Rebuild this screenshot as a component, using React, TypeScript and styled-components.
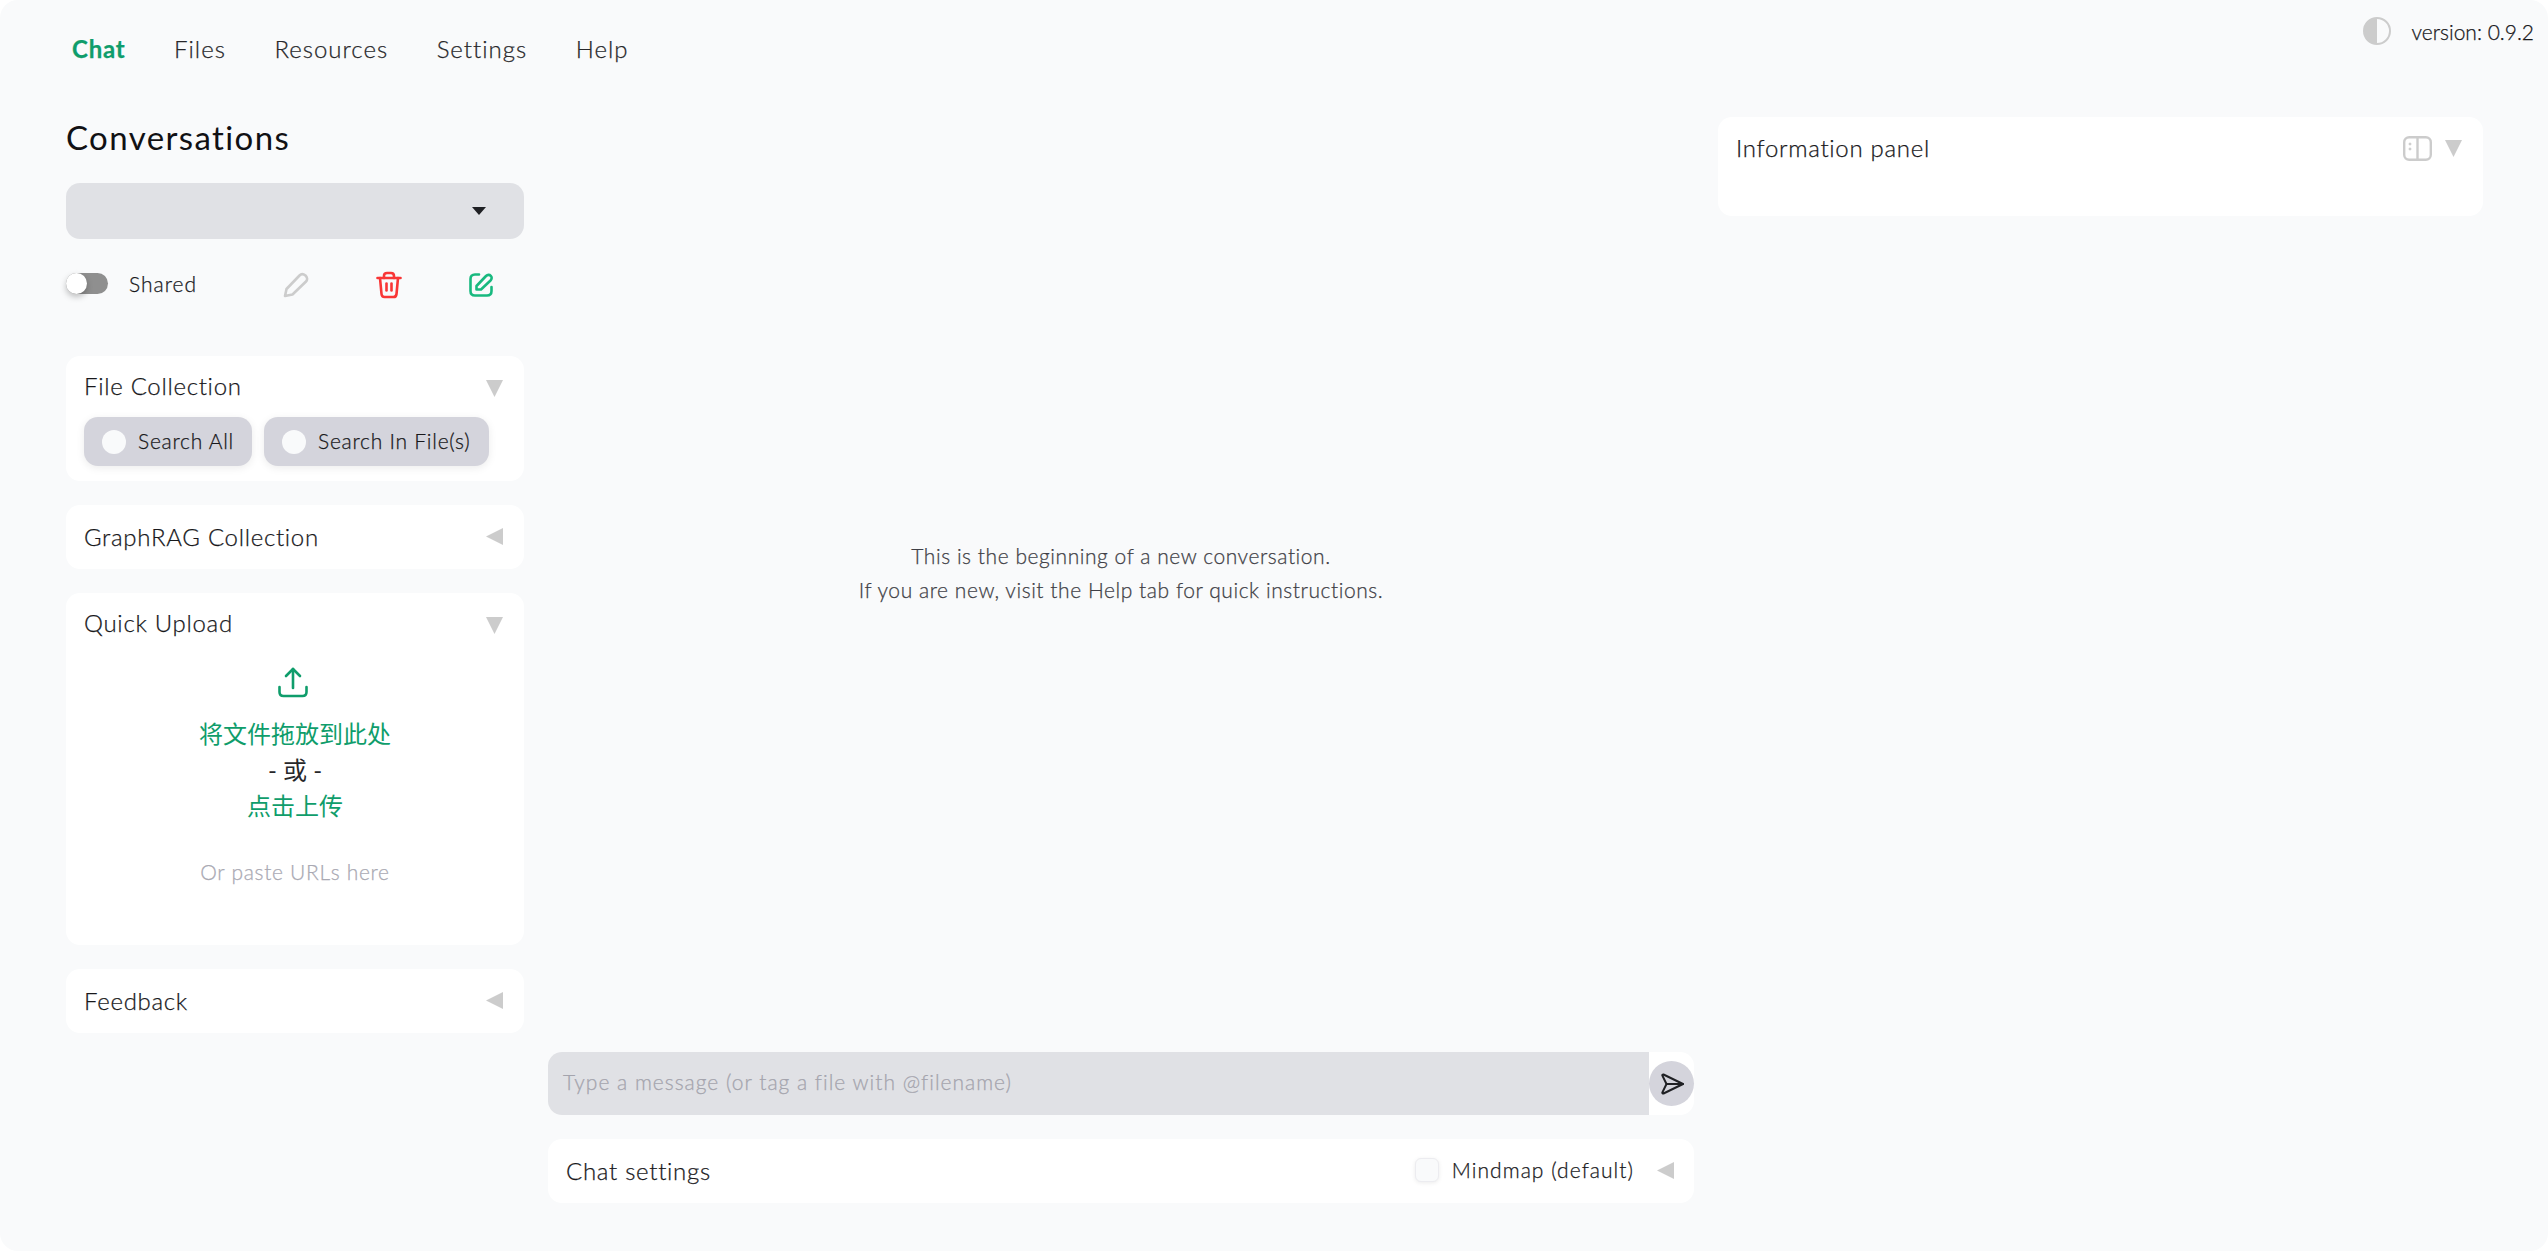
import { createGlobalStyle, styled } from "styled-components"

const FONT = `"Lato", "Noto Sans CJK SC", sans-serif`

const GlobalStyle = createGlobalStyle`
	html, body {
		margin: 0;
		padding: 0;
		background: #ffffff;
	}
	* {
		box-sizing: border-box;
	}
	body {
		font-family: ${FONT};
		font-weight: 300;
		-webkit-text-stroke: 0.25px;
	}
`

function Triangle({ open }: { open?: boolean }) {
	return (
		<ArrowSvg viewBox="0 0 17 17">
			{open ? <path d="M0 0H17L8.5 17Z" fill="#cccccc" /> : <path d="M17 0V17L0 8.5Z" fill="#cccccc" />}
		</ArrowSvg>
	)
}

function ThemeIcon() {
	return (
		<svg width="28" height="28" viewBox="0 0 28 28">
			<circle cx="14" cy="14" r="13" fill="none" stroke="#cccccc" strokeWidth="2" />
			<path d="M14 1a13 13 0 0 0 0 26Z" fill="#cccccc" />
		</svg>
	)
}

function PanelIcon() {
	return (
		<svg width="29" height="25" viewBox="0 0 29 25" fill="none" stroke="#cccccc" strokeWidth="2.4">
			<rect x="1.2" y="1.2" width="26.6" height="22.6" rx="5" />
			<path d="M14.5 1.2V23.8" />
			<circle cx="7" cy="8" r="1" fill="#cccccc" strokeWidth="1" />
			<circle cx="7" cy="13" r="1" fill="#cccccc" strokeWidth="1" />
		</svg>
	)
}

function UploadIcon() {
	return (
		<UploadSvg width="30" height="31" viewBox="0 0 30 31" fill="none" stroke="#0f9d6b" strokeWidth="2.6" strokeLinecap="round" strokeLinejoin="round">
			<path d="M15 2V21" />
			<path d="M8 9L15 2L22 9" />
			<path d="M1.5 20V25C1.5 27.5 3 29 5.5 29H24.5C27 29 28.5 27.5 28.5 25V20" />
		</UploadSvg>
	)
}

function SendIcon() {
	return (
		<svg width="24" height="24" viewBox="0 0 24 24" fill="none" stroke="#1f2024" strokeWidth="2" strokeLinecap="round" strokeLinejoin="round">
			<path d="M3.5 2.5C2.8 2.2 2.1 2.8 2.4 3.6L6.5 12L2.4 20.4C2.1 21.2 2.8 21.8 3.5 21.5L23 12Z" />
			<path d="M6.5 12H23" />
		</svg>
	)
}

function PencilIcon() {
	return (
		<svg width="26" height="26" viewBox="0 0 26 26" fill="none" stroke="#cccccc" strokeWidth="2.6" strokeLinecap="round" strokeLinejoin="round">
			<path d="M2 24L3.5 17L16.5 3.5C18 2 20.5 2 22.5 3.5C24.5 5.5 24.5 8 23 9.5L9.5 22.5Z" />
		</svg>
	)
}

function TrashIcon() {
	return (
		<svg width="26" height="28" viewBox="0 0 26 28" fill="none" stroke="#f93636" strokeWidth="2.6" strokeLinecap="round" strokeLinejoin="round">
			<path d="M1.5 7H24.5" />
			<path d="M8 7V5C8 3 9 2 11 2H15C17 2 18 3 18 5V7" />
			<path d="M4 7L5.5 23C5.7 25 7 26 8.5 26H17.5C19 26 20.3 25 20.5 23L22 7" />
			<path d="M10.5 12.5V19.5" />
			<path d="M15.5 12.5V19.5" />
		</svg>
	)
}

function EditIcon() {
	return (
		<svg width="26" height="26" viewBox="0 0 26 26" fill="none" stroke="#18b97f" strokeWidth="2.6" strokeLinecap="round" strokeLinejoin="round">
			<path d="M11 2.5H7C4 2.5 2.5 4 2.5 7V19C2.5 22 4 23.5 7 23.5H19C22 23.5 23.5 22 23.5 19V15" />
			<path d="M8.5 17.5V14L18 4C19.5 2.5 21.5 2.5 22.8 3.8C24 5 24 7 22.5 8.5L13 17.5Z" />
		</svg>
	)
}

function App() {
	return (
		<>
			<GlobalStyle />
			<Page>
				<Header>
					<Nav>
						<NavItem $active>Chat</NavItem>
						<NavItem>Files</NavItem>
						<NavItem>Resources</NavItem>
						<NavItem>Settings</NavItem>
						<NavItem>Help</NavItem>
					</Nav>
					<VersionBox>
						<ThemeIcon />
						<Version>version: 0.9.2</Version>
					</VersionBox>
				</Header>
				<Main>
					<LeftColumn>
						<Heading>Conversations</Heading>
						<Dropdown>
							<Caret />
						</Dropdown>
						<ActionRow>
							<ShareBox>
								<Toggle>
									<Knob />
								</Toggle>
								<ShareLabel>Shared</ShareLabel>
							</ShareBox>
							<IconGroup>
								<IconSlot>
									<PencilIcon />
								</IconSlot>
								<IconSlot>
									<TrashIcon />
								</IconSlot>
								<IconSlot>
									<EditIcon />
								</IconSlot>
							</IconGroup>
						</ActionRow>

						<CollectionCard>
							<CardHead>
								<CardTitle>File Collection</CardTitle>
								<Triangle open />
							</CardHead>
							<RadioRow>
								<RadioPill>
									<RadioDot />
									<RadioText>Search All</RadioText>
								</RadioPill>
								<RadioPill>
									<RadioDot />
									<RadioText>Search In File(s)</RadioText>
								</RadioPill>
							</RadioRow>
						</CollectionCard>

						<ClosedCard>
							<CardTitle>GraphRAG Collection</CardTitle>
							<Triangle />
						</ClosedCard>

						<UploadCard>
							<CardHead>
								<CardTitle>Quick Upload</CardTitle>
								<Triangle open />
							</CardHead>
							<DropZone>
								<UploadIcon />
								<DropText $green>将文件拖放到此处</DropText>
								<DropText>- 或 -</DropText>
								<DropText $green>点击上传</DropText>
								<PasteHint>Or paste URLs here</PasteHint>
							</DropZone>
						</UploadCard>

						<ClosedCard>
							<CardTitle>Feedback</CardTitle>
							<Triangle />
						</ClosedCard>
					</LeftColumn>

					<CenterColumn>
						<ChatArea>
							<Placeholder>This is the beginning of a new conversation.</Placeholder>
							<Placeholder>If you are new, visit the Help tab for quick instructions.</Placeholder>
						</ChatArea>
						<InputRow>
							<MessageInput>
								<InputHint>Type a message (or tag a file with @filename)</InputHint>
							</MessageInput>
							<SendButton>
								<SendIcon />
							</SendButton>
						</InputRow>
						<SettingsCard>
							<CardTitle>Chat settings</CardTitle>
							<SettingsRight>
								<CheckBox />
								<MindmapLabel>Mindmap (default)</MindmapLabel>
								<Triangle />
							</SettingsRight>
						</SettingsCard>
					</CenterColumn>

					<RightColumn>
						<InfoCard>
							<CardTitle>Information panel</CardTitle>
							<InfoIcons>
								<PanelIcon />
								<Triangle open />
							</InfoIcons>
						</InfoCard>
					</RightColumn>
				</Main>
			</Page>
		</>
	)
}

const Page = styled.div`
	width: 2548px;
	height: 1251px;
	background: #f9fafb;
	border-radius: 18px;
	overflow: hidden;
	color: #18181b;
`

const Header = styled.div`
	display: flex;
	justify-content: space-between;
	height: 117px;
	padding: 30px 14px 0 72px;
`

const Nav = styled.div`
	display: flex;
	gap: 48.5px;
	height: 36px;
	align-items: center;
`

const NavItem = styled.span<{ $active?: boolean }>`
	font-size: 24px;
	font-weight: ${({ $active }) => ($active ? 700 : 300)};
	color: ${({ $active }) => ($active ? "#0f9d6b" : "#27272a")};
	letter-spacing: ${({ $active }) => ($active ? "0.8px" : "1px")};
`

const VersionBox = styled.div`
	display: flex;
	align-items: center;
	gap: 21px;
	height: 28px;
	margin-top: -13px;
`

const Version = styled.span`
	font-size: 21px;
	color: #18181b;
	letter-spacing: 0;
`

const Main = styled.div`
	display: flex;
	gap: 24px;
	padding-left: 66px;
`

const LeftColumn = styled.div`
	display: flex;
	flex-direction: column;
	width: 458px;
`

const Heading = styled.h2`
	margin: 0 0 24px;
	height: 42px;
	line-height: 40px;
	font-size: 33px;
	font-weight: 400;
	-webkit-text-stroke: 0;
	color: #111114;
	letter-spacing: 1.4px;
`

const Dropdown = styled.div`
	display: flex;
	align-items: center;
	justify-content: flex-end;
	height: 56px;
	padding-right: 38px;
	background: #e0e1e5;
	border-radius: 14px;
`

const Caret = styled.div`
	width: 0;
	height: 0;
	border-left: 7px solid transparent;
	border-right: 7px solid transparent;
	border-top: 8px solid #1f2024;
`

const ActionRow = styled.div`
	display: flex;
	align-items: center;
	height: 44px;
	margin: 24px 0 49px;
`

const ShareBox = styled.div`
	display: flex;
	flex: none;
	align-items: center;
	gap: 21px;
	width: 217px;
	margin-top: -4px;
`

const Toggle = styled.div`
	position: relative;
	width: 42px;
	height: 21px;
	border-radius: 11px;
	background: #8f8f8f;
`

const Knob = styled.div`
	position: absolute;
	left: 0;
	top: 0;
	width: 21px;
	height: 21px;
	border-radius: 50%;
	background: #ffffff;
	box-shadow: 0 3px 6px rgba(0, 0, 0, 0.25);
`

const ShareLabel = styled.span`
	font-size: 21px;
	color: #18181b;
	letter-spacing: 1px;
`

const IconGroup = styled.div`
	display: flex;
	align-items: center;
	gap: 66.5px;
`

const IconSlot = styled.div`
	display: flex;
	flex: none;
	justify-content: center;
	width: 26px;
`

const CardBase = styled.div`
	background: #ffffff;
	border-radius: 14px;
`

const CollectionCard = styled(CardBase)`
	height: 125px;
	padding: 14px 18px 0;
	margin-bottom: 24px;
`

const UploadCard = styled(CardBase)`
	height: 352px;
	padding: 14px 18px 0;
	margin-bottom: 24px;
`

const CardTitle = styled.span`
	font-size: 24px;
	color: #18181b;
	letter-spacing: 0.7px;
`

const CardHead = styled.div`
	display: flex;
	align-items: center;
	justify-content: space-between;
	height: 36px;
	padding-right: 3px;
	${CardTitle} {
		margin-top: -5px;
	}
`

const ArrowSvg = styled.svg`
	display: block;
	flex: none;
	width: 17px;
	height: 17px;
`

const ClosedCard = styled(CardBase)`
	display: flex;
	align-items: center;
	justify-content: space-between;
	height: 64px;
	padding: 0 21px 2px 18px;
	margin-bottom: 24px;
`

const RadioRow = styled.div`
	display: flex;
	gap: 12px;
	margin-top: 11px;
`

const RadioPill = styled.div`
	display: flex;
	align-items: center;
	gap: 12px;
	height: 49px;
	padding: 0 18px;
	border-radius: 14px;
	background: #d4d4dc;
	box-shadow: 0 2px 8px rgba(0, 0, 0, 0.08);
`

const RadioDot = styled.div`
	width: 24px;
	height: 24px;
	border-radius: 50%;
	background: #f9fafb;
`

const RadioText = styled.span`
	font-size: 21px;
	color: #18181b;
	letter-spacing: 0.75px;
	margin-top: -3px;
`

const UploadSvg = styled.svg`
	margin-right: 5px;
`

const DropZone = styled.div`
	display: flex;
	flex-direction: column;
	align-items: center;
	padding-top: 24px;
`

const DropText = styled.div<{ $green?: boolean }>`
	font-size: 24px;
	font-weight: 400;
	line-height: 36px;
	-webkit-text-stroke: 0;
	color: ${({ $green }) => ($green ? "#0f9d6b" : "#27272a")};
	&:first-of-type {
		margin-top: 18px;
	}
`

const PasteHint = styled.div`
	margin-top: 35px;
	font-size: 21px;
	color: #a9a9b3;
	letter-spacing: 0.7px;
`

const CenterColumn = styled.div`
	display: flex;
	flex-direction: column;
	width: 1146px;
	height: 1086px;
`

const ChatArea = styled.div`
	flex: 1;
	display: flex;
	flex-direction: column;
	align-items: center;
	justify-content: center;
	padding-bottom: 24px;
`

const Placeholder = styled.div`
	font-size: 21px;
	line-height: 34px;
	color: #3f3f46;
	letter-spacing: 0.55px;
`

const InputRow = styled.div`
	display: flex;
	align-items: center;
	height: 63px;
	background: #ffffff;
	border-radius: 14px;
	margin-bottom: 24px;
`

const MessageInput = styled.div`
	display: flex;
	align-items: center;
	width: 1101px;
	height: 63px;
	padding: 0 0 4px 15px;
	background: #e0e1e5;
	border-radius: 14px 0 0 14px;
`

const InputHint = styled.span`
	font-size: 21px;
	color: #a4a4ad;
	letter-spacing: 1px;
`

const SendButton = styled.div`
	display: flex;
	align-items: center;
	justify-content: center;
	width: 45px;
	height: 45px;
	border-radius: 50%;
	background: #d4d4dc;
`

const SettingsCard = styled(CardBase)`
	display: flex;
	align-items: center;
	justify-content: space-between;
	height: 64px;
	padding: 0 20px 2px 18px;
`

const SettingsRight = styled.div`
	display: flex;
	align-items: center;
`

const CheckBox = styled.div`
	width: 24px;
	height: 24px;
	border-radius: 6px;
	border: 1px solid #ececf0;
	background: #f9fafb;
	box-shadow: 0 1px 4px rgba(0, 0, 0, 0.08);
	margin-right: 13px;
`

const MindmapLabel = styled.span`
	font-size: 21px;
	color: #18181b;
	letter-spacing: 1.05px;
	margin-right: 23px;
	margin-top: -2px;
`

const RightColumn = styled.div`
	width: 765px;
`

const InfoCard = styled(CardBase)`
	display: flex;
	align-items: flex-start;
	justify-content: space-between;
	height: 99px;
	padding: 16px 21px 0 18px;
`

const InfoIcons = styled.div`
	display: flex;
	align-items: center;
	gap: 13px;
	height: 36px;
	margin-top: -3px;
`

export default App
